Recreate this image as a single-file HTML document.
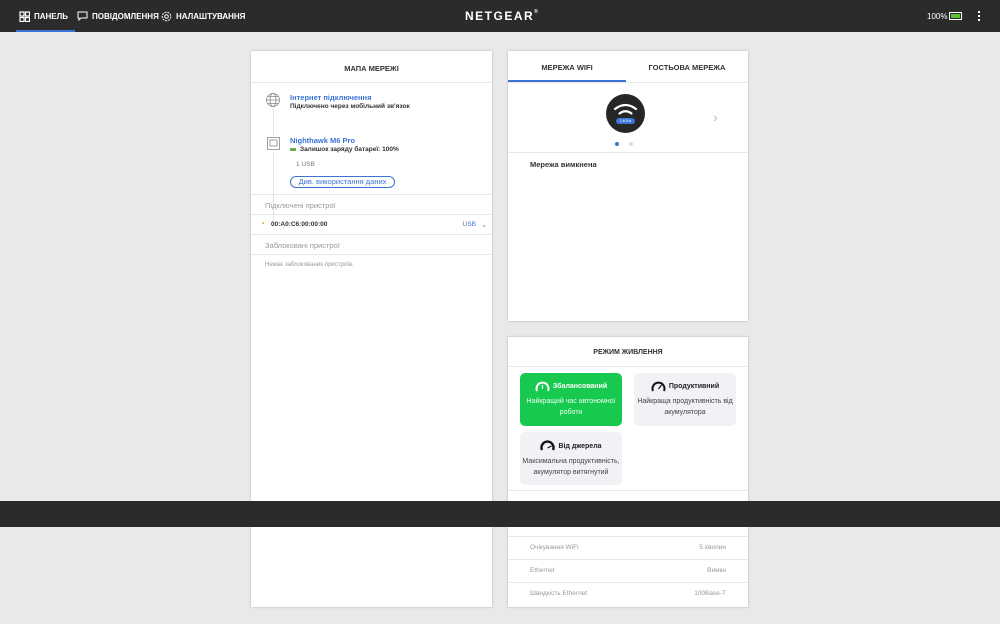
<!DOCTYPE html><html><head><meta charset="utf-8"><style>
*{box-sizing:border-box;margin:0;padding:0}
body{width:1000px;height:624px;background:#e9e9e9;font-family:"Liberation Sans",sans-serif;position:relative;overflow:hidden;color:#333}
.top{position:absolute;left:0;top:0;width:1000px;height:32px;background:#2b2b2b;color:#fff}
.nav{position:absolute;top:11px;font-size:8px;font-weight:bold;display:flex;align-items:center;gap:4px}
.card{position:absolute;background:#fff;box-shadow:0 0 2px rgba(0,0,0,.25)}
.t{font-size:7.5px;font-weight:bold;text-align:center}
.row{position:absolute;left:0;right:0;border-top:1px solid #e6e6e6;font-size:7px}
.blue{color:#3b73d6}
.pm{position:absolute;border-radius:5px;background:#f1f2f5;font-size:7px;text-align:center;line-height:11px;padding-top:8px;color:#444}
.pm b{display:inline-flex;align-items:center;gap:3px}
</style></head><body>
<div class="top">
<div class="nav" style="left:19px"><svg width="11" height="11"><g fill="none" stroke="#fff" stroke-width="1.2"><rect x="1" y="1" width="4" height="4"/><rect x="6.5" y="1" width="4" height="4"/><rect x="1" y="6.5" width="4" height="4"/><rect x="6.5" y="6.5" width="4" height="4"/></g></svg>ПАНЕЛЬ</div>
<div style="position:absolute;left:16px;top:30px;width:59px;height:2px;background:#3b73d6"></div>
<div class="nav" style="left:77px"><svg width="11" height="10"><path d="M1 1h9v6H4l-2 2V7H1z" fill="none" stroke="#fff"/></svg>ПОВІДОМЛЕННЯ</div>
<div class="nav" style="left:161px"><svg width="11" height="11"><circle cx="5.5" cy="5.5" r="4.3" fill="none" stroke="#fff" stroke-dasharray="2 1"/><circle cx="5.5" cy="5.5" r="1.8" fill="none" stroke="#fff"/></svg>НАЛАШТУВАННЯ</div>
<div style="position:absolute;left:465px;top:9px;font-size:12px;font-weight:bold;letter-spacing:1.5px">NETGEAR<span style="font-size:5px;vertical-align:top">®</span></div>
<div style="position:absolute;left:927px;top:12px;font-size:8px">100%</div>
<div style="position:absolute;left:949px;top:12px;width:13px;height:8px;border:1px solid #fff;padding:1px"><div style="background:#5ec236;height:100%"></div></div>
<div style="position:absolute;left:978px;top:11px;width:2px;height:10px;background:repeating-linear-gradient(#fff 0 2px,transparent 2px 4px)"></div>
</div>

<div class="card" style="left:251px;top:51px;width:241px;height:556px">
<div class="t" style="position:absolute;top:13px;width:100%">МАПА МЕРЕЖІ</div>
<div style="position:absolute;top:31px;left:0;right:0;border-top:1px solid #e6e6e6"></div>
<svg style="position:absolute;left:15px;top:42px" width="14" height="14"><g fill="none" stroke="#888" stroke-width=".8"><circle cx="7" cy="7" r="6.5"/><ellipse cx="7" cy="7" rx="3" ry="6.5"/><path d="M.5 7h13M2 3.5h10M2 10.5h10"/></g></svg>
<div style="position:absolute;left:22px;top:58px;width:1px;height:26px;background:#e4e4e4"></div>
<div style="position:absolute;left:22px;top:101px;width:1px;height:74px;background:#e4e4e4"></div>
<div class="blue" style="position:absolute;left:39px;top:42px;font-size:7.5px;font-weight:bold">Інтернет підключення</div>
<div style="position:absolute;left:39px;top:52px;font-size:6.5px;font-weight:bold">Підключено через мобільний зв'язок</div>
<svg style="position:absolute;left:16px;top:86px" width="13" height="13"><g fill="none" stroke="#888" stroke-width=".8"><rect x=".5" y=".5" width="12" height="12"/><rect x="3" y="3" width="7" height="6"/></g></svg>
<div class="blue" style="position:absolute;left:39px;top:85px;font-size:7.5px;font-weight:bold">Nighthawk M6 Pro</div>
<div style="position:absolute;left:39px;top:97px;width:6px;height:3px;background:#6ab04c"></div>
<div style="position:absolute;left:49px;top:95px;font-size:6.5px;font-weight:bold">Залишок заряду батареї: 100%</div>
<div style="position:absolute;left:45px;top:110px;font-size:6.5px;color:#777">1 USB</div>
<div class="blue" style="position:absolute;left:39px;top:125px;width:105px;height:12px;border:1px solid #3b73d6;border-radius:7px;font-size:7.5px;text-align:center;line-height:10px">Див. використання даних</div>
<div class="row" style="top:143px;height:20px;padding:6px 14px;color:#999;font-size:7.5px">Підключені пристрої</div>
<div class="row" style="top:163px;height:20px;padding:6px 20px;font-weight:bold;font-size:6.5px"><span style="position:absolute;left:11px;top:5px;color:#e8a13a">•</span>00:A0:C6:00:00:00<span class="blue" style="position:absolute;right:16px;font-weight:normal">USB</span><span style="position:absolute;right:5px;color:#999">⌄</span></div>
<div class="row" style="top:183px;height:20px;padding:6px 14px;color:#999;font-size:7.5px">Заблоковані пристрої</div>
<div class="row" style="top:203px;padding:7px 14px;color:#999;font-size:6px">Немає заблокованих пристроїв.</div>
</div>

<div class="card" style="left:508px;top:51px;width:240px;height:270px">
<div class="t" style="position:absolute;top:12px;left:0;width:118px">МЕРЕЖА WIFI</div>
<div class="t" style="position:absolute;top:12px;left:118px;width:122px">ГОСТЬОВА МЕРЕЖА</div>
<div style="position:absolute;top:29px;left:0;width:118px;height:2px;background:#3b73d6"></div>
<div style="position:absolute;top:31px;left:0;right:0;border-top:1px solid #e6e6e6"></div>
<div style="position:absolute;left:98px;top:43px;width:39px;height:39px;border-radius:50%;background:#262626"></div>
<svg style="position:absolute;left:105px;top:50px" width="25" height="20"><g fill="none" stroke="#fff" stroke-width="2.2" stroke-linecap="round"><path d="M2 8q10.5-8 21 0"/><path d="M6.5 12.5q6-4.5 12 0"/></g></svg>
<div style="position:absolute;left:108px;top:67px;width:19px;height:6px;border-radius:3px;background:#3b73d6;color:#fff;font-size:3.5px;text-align:center;line-height:6px">2.4GHz</div>
<div style="position:absolute;left:205px;top:58px;font-size:14px;color:#bbb">›</div>
<div style="position:absolute;left:107px;top:91px;width:4px;height:4px;border-radius:50%;background:#3b73d6"></div>
<div style="position:absolute;left:121px;top:91px;width:4px;height:4px;border-radius:50%;background:#ddd"></div>
<div style="position:absolute;top:101px;left:0;right:0;border-top:1px solid #e6e6e6"></div>
<div style="position:absolute;left:22px;top:109px;font-size:7.5px;font-weight:bold">Мережа вимкнена</div>
</div>

<div class="card" style="left:508px;top:337px;width:240px;height:270px">
<div class="t" style="position:absolute;top:12px;width:100%;font-size:7px">РЕЖИМ ЖИВЛЕННЯ</div>
<div style="position:absolute;top:29px;left:0;right:0;border-top:1px solid #e6e6e6"></div>
<div class="pm" style="left:12px;top:36px;width:102px;height:53px;background:#18c94f;color:#eafff0"><b style="color:#fff"><svg width="15" height="11"><path d="M2 10A6 6 0 1 1 13 10" fill="none" stroke="#fff" stroke-width="2"/><path d="M7.5 4v4" stroke="#fff" stroke-width="1.2"/></svg>Збалансований</b><br>Найкращий час автономної<br>роботи</div>
<div class="pm" style="left:126px;top:36px;width:102px;height:53px"><b style="color:#222"><svg width="15" height="11"><path d="M2 10A6 6 0 1 1 13 10" fill="none" stroke="#111" stroke-width="2"/><path d="M7.5 8l3-4" stroke="#111" stroke-width="1.2"/></svg>Продуктивний</b><br>Найкраща продуктивність від<br>акумулятора</div>
<div class="pm" style="left:12px;top:95px;width:102px;height:53px"><b style="color:#222"><svg width="15" height="12"><path d="M2 10A6 6 0 1 1 13 10" fill="none" stroke="#111" stroke-width="2.4"/><path d="M7.5 8l4-2" stroke="#111" stroke-width="1.2"/></svg>Від джерела</b><br>Максимальна продуктивність,<br>акумулятор витягнутий</div>
<div style="position:absolute;top:153px;left:0;right:0;border-top:1px solid #e6e6e6"></div>
<div class="row" style="top:199px;height:23px;padding:7px 22px;color:#999;font-size:6.5px">Очікування WiFi<span style="position:absolute;right:22px">5 хвилин</span></div>
<div class="row" style="top:222px;height:23px;padding:7px 22px;color:#999;font-size:6.5px">Ethernet<span style="position:absolute;right:22px">Вимкн</span></div>
<div class="row" style="top:245px;height:23px;padding:7px 22px;color:#999;font-size:6.5px">Швидкість Ethernet<span style="position:absolute;right:22px">100Base-T</span></div>
</div>

<div style="position:absolute;left:0;top:501px;width:1000px;height:26px;background:#2b2b2b"></div>
</body></html>
